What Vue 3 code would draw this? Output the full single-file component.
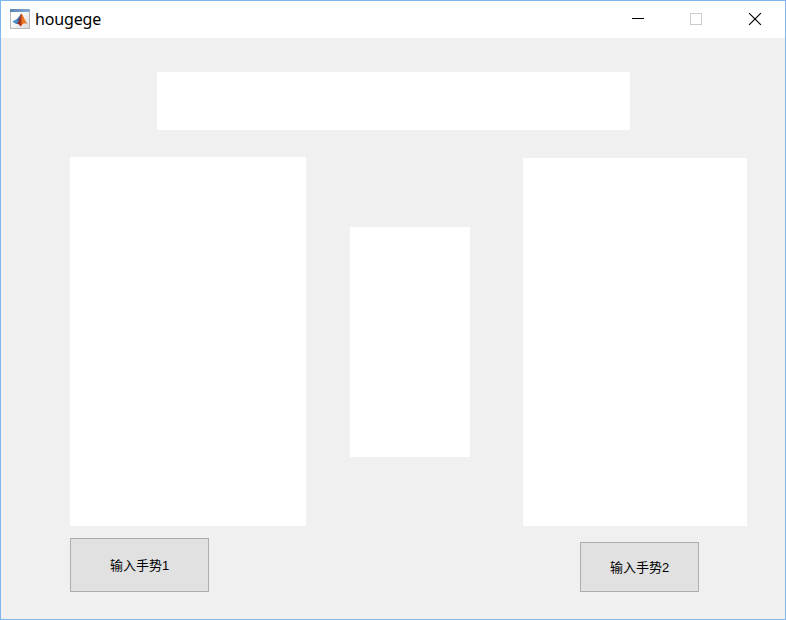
<script setup>
import { ref } from 'vue'

const title = ref('hougege')
</script>

<template>
  <div class="window">
    <header class="titlebar">
      <svg class="app-icon" width="20" height="20" viewBox="0 0 20 20">
        <defs>
          <linearGradient id="paper" x1="0" y1="0" x2="1" y2="1">
            <stop offset="0.3" stop-color="#ffffff" />
            <stop offset="1" stop-color="#d8d8d8" />
          </linearGradient>
          <linearGradient id="flame" x1="0" y1="0" x2="1" y2="0">
            <stop offset="0" stop-color="#5c2a3c" />
            <stop offset="0.35" stop-color="#a8301c" />
            <stop offset="0.55" stop-color="#f0741c" />
            <stop offset="0.75" stop-color="#ee7a24" />
            <stop offset="1" stop-color="#b82c14" />
          </linearGradient>
          <linearGradient id="bar" x1="0" y1="0" x2="1" y2="0">
            <stop offset="0" stop-color="#5b84b4" />
            <stop offset="1" stop-color="#86abd1" />
          </linearGradient>
        </defs>
        <rect x="0.5" y="0.5" width="19" height="19" fill="url(#paper)" stroke="#b4b8bc" />
        <rect x="0" y="0" width="20" height="3" fill="url(#bar)" />
        <path d="M2.6 12.4 L7 10.2 C8.6 9.4 9.8 6.2 11.3 4.6 L10 11.3 L6.6 15 Z" fill="#315f9d" />
        <path d="M2.6 12.4 L7 10.2 L8.5 12 L6.6 15 Z" fill="#4b91c9" />
        <path d="M11.3 4.4 C13.5 5.8 14.7 11.8 17.6 15.2 C15.2 13.5 13.4 13.8 10.8 17.4 C9.8 17.4 9.2 14.4 6.4 14.8 C9.3 12.8 9.7 8.6 11.3 4.4 Z" fill="url(#flame)" />
      </svg>
      <span class="title">{{ title }}</span>
      <div class="controls">
        <svg width="58" height="37" viewBox="0 0 58 37" shape-rendering="crispEdges">
          <path d="M23 17.5H35" stroke="#000" />
        </svg>
        <svg width="58" height="37" viewBox="0 0 58 37" shape-rendering="crispEdges">
          <rect x="23.5" y="12.5" width="11" height="11" fill="none" stroke="#ccc" />
        </svg>
        <svg width="60" height="37" viewBox="0 0 60 37">
          <path d="M24.1 12.1L35.9 23.9M35.9 12.1L24.1 23.9" fill="none" stroke="#000" stroke-width="1.15" />
        </svg>
      </div>
    </header>
    <main class="content">
      <div class="result"></div>
      <div class="columns">
        <section class="column left">
          <div class="axes"></div>
          <button class="push">输入手势1</button>
        </section>
        <div class="middle"></div>
        <section class="column right">
          <div class="axes"></div>
          <button class="push">输入手势2</button>
        </section>
      </div>
    </main>
  </div>
</template>

<style>
body {
  margin: 0;
}
</style>

<style scoped>
.window {
  box-sizing: border-box;
  width: 786px;
  height: 620px;
  border: 1px solid #7eb6f0;
  background: #f0f0f0;
  color: #000;
  overflow: hidden;
}
.titlebar {
  display: flex;
  align-items: flex-start;
  height: 37px;
  padding-left: 9px;
  background: #fff;
}
.app-icon {
  flex: none;
  margin-top: 8px;
}
.title {
  margin: 7px 0 0 5px;
  font: 16px/22px "Noto Sans", "Open Sans", sans-serif;
  letter-spacing: -0.15px;
}
.controls {
  display: flex;
  margin-left: auto;
}
.controls svg {
  display: block;
}
.content {
  padding: 34px 38px 0 69px;
}
.result {
  width: 473px;
  height: 58px;
  margin-left: 87px;
  background: #fff;
}
.columns {
  display: flex;
  align-items: flex-start;
  margin-top: 27px;
}
.column {
  display: flex;
  flex-direction: column;
}
.axes,
.middle {
  background: #fff;
}
.left {
  width: 236px;
  gap: 12px;
}
.left .axes {
  height: 369px;
}
.middle {
  width: 120px;
  height: 230px;
  margin: 70px 53px 0 44px;
}
.right {
  width: 224px;
  gap: 16px;
  margin-top: 1px;
}
.right .axes {
  height: 368px;
}
.push {
  box-sizing: border-box;
  padding: 2px 0 0;
  border: 1px solid #adadad;
  border-radius: 0;
  background: #e1e1e1;
  color: #000;
  font: 13px/18px "Liberation Sans", "Noto Sans CJK SC", sans-serif;
}
.left .push {
  width: 139px;
  height: 54px;
}
.right .push {
  width: 119px;
  height: 50px;
  margin-left: 57px;
}
</style>
